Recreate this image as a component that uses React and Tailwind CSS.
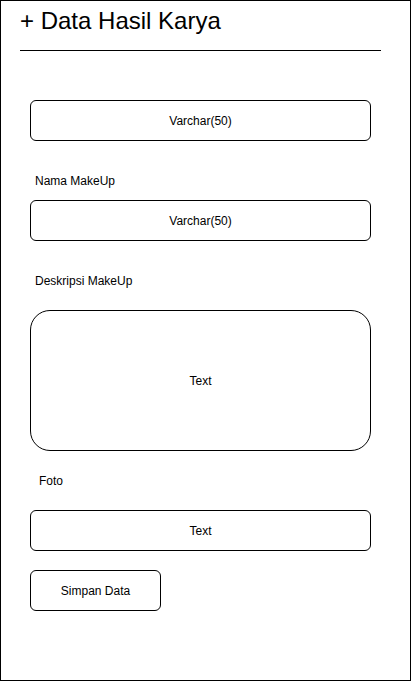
export default function App() {
  const font = { fontFamily: '"Liberation Sans", Arial, sans-serif' };

  return (
    <div
      className="w-[411px] h-[681px] border border-black bg-white text-black flex flex-col items-start"
      style={font}
    >
      {/* ---- Titre ---- */}
      <h1 className="mt-[6px] ml-[19px] text-[24px] leading-[28px] font-normal">
        + Data Hasil Karya
      </h1>
      <div className="mt-[15px] ml-[19px] w-[361px] h-px bg-black" />

      {/* ---- Champ sans label ---- */}
      <div className="mt-[49px] ml-[29px] w-[341px] h-[41px] border border-black rounded-[6px] flex items-center justify-center text-[12px]">
        Varchar(50)
      </div>

      {/* ---- Nama MakeUp ---- */}
      <label className="mt-[33px] ml-[34px] text-[12px] leading-[14px]">Nama MakeUp</label>
      <div className="mt-[12px] ml-[29px] w-[341px] h-[41px] border border-black rounded-[6px] flex items-center justify-center text-[12px]">
        Varchar(50)
      </div>

      {/* ---- Deskripsi MakeUp ---- */}
      <label className="mt-[33px] ml-[34px] text-[12px] leading-[14px]">Deskripsi MakeUp</label>
      <div className="mt-[22px] ml-[29px] w-[341px] h-[141px] border border-black rounded-[20px] flex items-center justify-center text-[12px]">
        Text
      </div>

      {/* ---- Foto ---- */}
      <label className="mt-[23px] ml-[38px] text-[12px] leading-[14px]">Foto</label>
      <div className="mt-[22px] ml-[29px] w-[341px] h-[41px] border border-black rounded-[6px] flex items-center justify-center text-[12px]">
        Text
      </div>

      {/* ---- Bouton ---- */}
      <button className="mt-[19px] ml-[29px] w-[131px] h-[41px] border border-black rounded-[6px] flex items-center justify-center text-[12px] bg-white">
        Simpan Data
      </button>
    </div>
  );
}
